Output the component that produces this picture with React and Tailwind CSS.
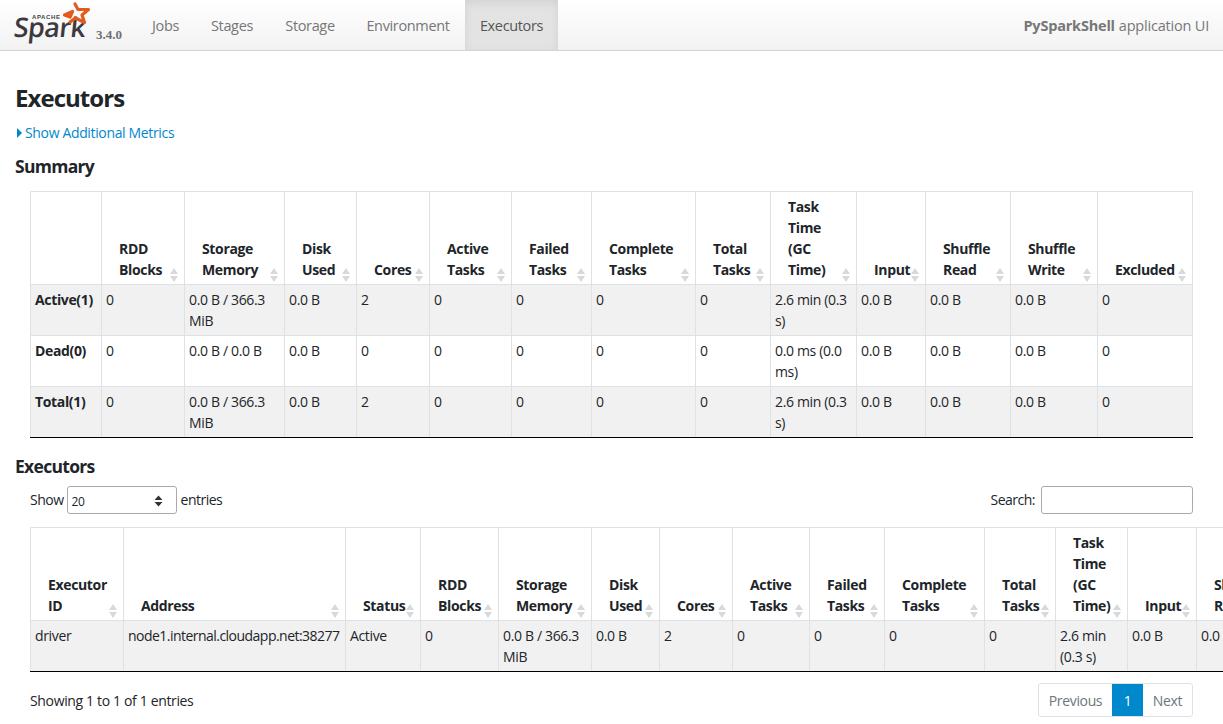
const summaryCols = [71, 83, 100, 72, 73, 82, 80, 104, 75, 86, 69, 85, 87, 95];
const summaryHead = ['', 'RDD Blocks', 'Storage Memory', 'Disk Used', 'Cores', 'Active Tasks', 'Failed Tasks', 'Complete Tasks', 'Total Tasks', 'Task Time (GC Time)', 'Input', 'Shuffle Read', 'Shuffle Write', 'Excluded'];
const summaryRows = [
  ['Active(1)', '0', '0.0 B / 366.3 MiB', '0.0 B', '2', '0', '0', '0', '0', '2.6 min (0.3 s)', '0.0 B', '0.0 B', '0.0 B', '0'],
  ['Dead(0)', '0', '0.0 B / 0.0 B', '0.0 B', '0', '0', '0', '0', '0', '0.0 ms (0.0 ms)', '0.0 B', '0.0 B', '0.0 B', '0'],
  ['Total(1)', '0', '0.0 B / 366.3 MiB', '0.0 B', '2', '0', '0', '0', '0', '2.6 min (0.3 s)', '0.0 B', '0.0 B', '0.0 B', '0'],
];

const execCols = [93, 222, 75, 78, 93, 68, 73, 77, 75, 100, 71, 72, 69, 70];
const execHead = ['Executor ID', 'Address', 'Status', 'RDD Blocks', 'Storage Memory', 'Disk Used', 'Cores', 'Active Tasks', 'Failed Tasks', 'Complete Tasks', 'Total Tasks', 'Task Time (GC Time)', 'Input', 'Shuffle Read'];
const execRow = ['driver', 'node1.internal.cloudapp.net:38277', 'Active', '0', '0.0 B / 366.3 MiB', '0.0 B', '2', '0', '0', '0', '0', '2.6 min (0.3 s)', '0.0 B', '0.0'];

function SortIcon() {
  return (
    <svg className="absolute right-[5px] bottom-[1px]" width="10" height="16" viewBox="0 0 10 16">
      <path d="M5 1 L9 7 L1 7 Z" fill="#d9d9d9" />
      <path d="M5 15 L9 9 L1 9 Z" fill="#d9d9d9" />
    </svg>
  );
}

function DataTable({ cols, head, rows, boldFirst, width }) {
  return (
    <table className="table-fixed border-collapse text-[14px] leading-[21px] text-[#212529]" style={{ width }}>
      <colgroup>
        {cols.map((w, i) => <col key={i} style={{ width: w }} />)}
      </colgroup>
      <thead>
        <tr className="h-[93px]">
          {head.map((h, i) => (
            <th key={i} className="relative border border-[#dee2e6] pt-[4px] pb-[4px] pl-[17px] pr-[18px] text-left align-bottom font-bold">
              {h}
              {h && <SortIcon />}
            </th>
          ))}
        </tr>
      </thead>
      <tbody>
        {rows.map((row, r) => (
          <tr key={r} className={`h-[51px] ${r % 2 === 0 ? 'bg-[#f1f1f1]' : 'bg-white'}`}>
            {row.map((c, i) => (
              <td
                key={i}
                className={`border border-[#dee2e6] px-[4px] pt-[4px] pb-[4px] align-top ${r === rows.length - 1 ? 'border-b-black' : ''} ${boldFirst && i === 0 ? 'font-bold' : ''} ${c.startsWith('node1') ? 'tracking-[-0.53px]' : ''}`}
              >
                {c}
              </td>
            ))}
          </tr>
        ))}
      </tbody>
    </table>
  );
}

function SparkLogo() {
  return (
    <div className="relative h-[50px] w-[96px] shrink-0">
      <span className="absolute left-[14px] top-[10px] -skew-x-6 text-[27px] leading-[34px] font-semibold tracking-[-0.6px] text-[#3c3a3e] font-['Open_Sans',sans-serif]">Spark</span>
      <span className="absolute left-[32px] top-[14px] text-[6px] leading-[7px] font-bold tracking-[0.6px] text-[#444] font-['Liberation_Sans',sans-serif]">APACHE</span>
      <svg className="absolute left-[60px] top-0" width="32" height="28" viewBox="0 0 32 28">
        <path d="M15 4 L18 9.5 L28.5 9.5 L22 15 L24.5 22.5 L15.5 18 L10 22 M10 17 L4.5 15 L12.5 11.5 Z" fill="none" stroke="#e25a1c" strokeWidth="3.2" strokeLinejoin="round" strokeLinecap="round" />
      </svg>
    </div>
  );
}

export default function App() {
  return (
    <div className="h-[724px] w-[1223px] overflow-hidden bg-white text-[14px] leading-[21px] text-[#212529] font-['Open_Sans',sans-serif] tracking-[-0.35px]">
      <header className="flex h-[51px] items-stretch justify-between border-b border-[#d4d4d4] bg-gradient-to-b from-white to-[#f2f2f2]">
        <div className="flex items-stretch">
          <SparkLogo />
          <span className="mt-[27px] w-[27px] text-[13px] leading-[16px] font-bold text-[#6b7075] font-['Liberation_Serif',serif] tracking-normal">3.4.0</span>
          <nav className="ml-[13px] flex items-stretch text-[#777] text-[14.5px]">
            <a className="flex w-[59px] items-center justify-center">Jobs</a>
            <a className="flex w-[74px] items-center justify-center">Stages</a>
            <a className="flex w-[82px] items-center justify-center">Storage</a>
            <a className="flex w-[114px] items-center justify-center">Environment</a>
            <a className="flex w-[93px] items-center justify-center bg-[#e3e3e3] text-[#555] shadow-[inset_0_3px_8px_rgba(0,0,0,0.08)]">Executors</a>
          </nav>
        </div>
        <div className="mr-[14px] flex items-center text-[14.5px] text-[#777] tracking-[-0.2px]">
          <strong className="font-bold">PySparkShell</strong>
          <span className="ml-[4px]">application UI</span>
        </div>
      </header>

      <main className="pl-[15px] pt-[30px]">
        <h3 className="text-[24px] leading-[34px] font-bold text-[#212529] tracking-[-0.95px]">Executors</h3>
        <a className="mt-[7px] ml-[2px] flex items-center text-[#0088cc] h-[21px]">
          <span className="mr-[3px] h-0 w-0 border-y-[5px] border-l-[5px] border-y-transparent border-l-[#0088cc]" />
          Show Additional Metrics
        </a>
        <h4 className="mt-[10px] h-[26px] text-[17.5px] leading-[26px] font-bold tracking-[-0.7px]">Summary</h4>

        <div className="ml-[15px] mt-[12px]">
          <DataTable cols={summaryCols} head={summaryHead} rows={summaryRows} boldFirst width={1162} />
        </div>

        <h4 className="mt-[15px] h-[26px] text-[17.5px] leading-[26px] font-bold tracking-[-0.7px]">Executors</h4>

        <div className="ml-[15px] mr-[30px] mt-[7px] flex h-[28px] items-center justify-between tracking-[-0.5px]">
          <label className="flex items-center">
            <span className="-mt-[2px]">Show</span>
            <span className="relative ml-[3px] mr-[4px] flex h-[28px] w-[110px] items-center rounded-[3px] border border-[#aaa] pl-[4px] text-[12px]">
              <span className="pt-[2px]">20</span>
              <svg className="absolute right-[13px] top-[8px]" width="9" height="12" viewBox="0 0 9 12">
                <path d="M4.5 0.5 L8.5 5 L0.5 5 Z M4.5 11.5 L8.5 7 L0.5 7 Z" fill="#333" />
              </svg>
            </span>
            <span className="-mt-[2px]">entries</span>
          </label>
          <label className="flex items-center">
            <span className="-mt-[2px]">Search:</span>
            <input className="ml-[6px] h-[28px] w-[152px] rounded-[3px] border border-[#aaa] bg-white" />
          </label>
        </div>

        <div className="ml-[15px] mt-[13px]">
          <DataTable cols={execCols} head={execHead} rows={[execRow]} width={1236} />
        </div>

        <div className="ml-[15px] mr-[30px] mt-[11px] flex h-[34px] items-center justify-between">
          <span>Showing 1 to 1 of 1 entries</span>
          <div className="flex h-[34px] items-stretch rounded-[3px] border border-[#dee2e6] text-[#6c757d]">
            <a className="flex w-[73px] items-center justify-center">Previous</a>
            <a className="flex w-[31px] items-center justify-center bg-[#0088cc] text-white">1</a>
            <a className="flex w-[49px] items-center justify-center">Next</a>
          </div>
        </div>
      </main>
    </div>
  );
}
